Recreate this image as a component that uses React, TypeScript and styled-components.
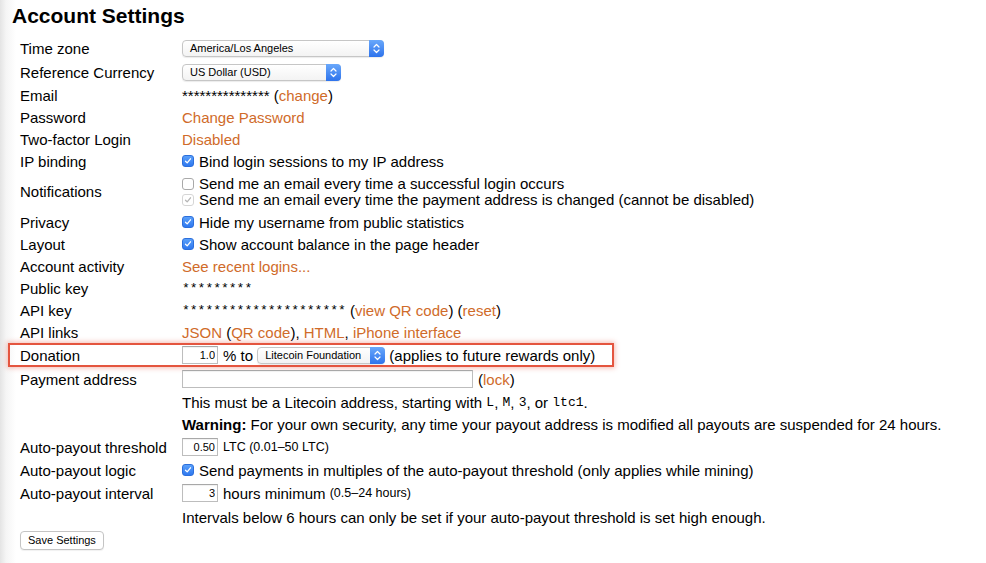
import React from 'react';
import styled, { createGlobalStyle, css } from 'styled-components';

const Global = createGlobalStyle`
  html, body {
    margin: 0;
    padding: 0;
    background: linear-gradient(to right, #e4e4e4 0px, #f5f5f5 6px, #ffffff 16px);
  }
  body {
    font-family: "Liberation Sans", Arial, Helvetica, sans-serif;
    color: #000;
  }
`;

const Page = styled.div`
  width: 986px;
  height: 563px;
  box-sizing: border-box;
  overflow: hidden;
  padding: 4px 0 0 12px;
`;

const Title = styled.h1`
  margin: 0 0 8px;
  font-size: 21px;
  line-height: 24px;
  font-weight: bold;
`;

const Form = styled.div`
  display: flex;
  flex-direction: column;
  padding-left: 8px;
`;

const Row = styled.div<{ $h?: number; $hl?: boolean }>`
  display: grid;
  grid-template-columns: 162px auto;
  align-items: center;
  height: ${(p) => p.$h ?? 22}px;
  font-size: 15px;
  line-height: 17px;
  ${(p) =>
    p.$hl &&
    css`
      margin-left: -12px;
      padding-left: 12px;
      width: 594px;
      box-shadow: inset 0 0 0 2px #e4553f, 0 0 5px 1px rgba(228, 85, 63, 0.4);
    `}
`;

const Label = styled.div`
  white-space: nowrap;
`;

const Value = styled.div<{ $col?: boolean }>`
  display: flex;
  flex-direction: ${(p) => (p.$col ? 'column' : 'row')};
  align-items: ${(p) => (p.$col ? 'flex-start' : 'center')};
  white-space: pre;
  line-height: ${(p) => (p.$col ? '16px' : '17px')};
`;

const Line = styled.div`
  display: flex;
  align-items: center;
  white-space: pre;
`;

const Link = styled.a`
  color: #d06b2a;
  text-decoration: none;
  cursor: pointer;
`;

const Mono = styled.span`
  font-family: "Liberation Mono", "Courier New", monospace;
  font-size: 13px;
`;

const Small = styled.span`
  font-size: 12.5px;
`;

const Bold = styled.b`
  font-weight: bold;
`;

const Check = styled.span<{ $state: 'on' | 'off' | 'dis' }>`
  display: inline-flex;
  align-items: center;
  justify-content: center;
  box-sizing: border-box;
  width: 12px;
  height: 12px;
  margin: 0 5px 0 0;
  border-radius: 3px;
  flex: none;
  ${(p) =>
    p.$state === 'on'
      ? css`
          background: linear-gradient(#5aa0fa, #2f78ef);
          border: 1px solid #2c6fdc;
        `
      : p.$state === 'dis'
      ? css`
          background: #fff;
          border: 1px solid #d6d6d6;
        `
      : css`
          background: #fff;
          border: 1px solid #a9a9a9;
        `}
`;

const CheckBox = ({ state }: { state: 'on' | 'off' | 'dis' }) => (
  <Check $state={state}>
    {state !== 'off' && (
      <svg width="8" height="8" viewBox="0 0 8 8">
        <path
          d="M1.5 4.2 L3.2 5.9 L6.5 1.8"
          fill="none"
          stroke={state === 'on' ? '#fff' : '#b5b5b5'}
          strokeWidth="1.3"
          strokeLinecap="round"
          strokeLinejoin="round"
        />
      </svg>
    )}
  </Check>
);

const SelectBox = styled.div<{ $w: number }>`
  display: inline-flex;
  align-items: center;
  box-sizing: border-box;
  width: ${(p) => p.$w}px;
  height: 17px;
  border: 1px solid #c6c6c6;
  border-radius: 4px;
  background: linear-gradient(#ffffff, #f3f3f3);
  box-shadow: 0 1px 1px rgba(0, 0, 0, 0.08);
  font-size: 11px;
  line-height: 15px;
  padding-left: 7px;
  flex: none;
`;

const SelectText = styled.span`
  flex: 1;
`;

const Stepper = styled.span`
  display: flex;
  align-items: center;
  justify-content: center;
  width: 15px;
  height: 17px;
  margin: -1px -1px -1px 0;
  border-radius: 0 4px 4px 0;
  background: linear-gradient(#69a8fb, #2e73ec);
`;

const Select = ({ w, children }: { w: number; children: React.ReactNode }) => (
  <SelectBox $w={w}>
    <SelectText>{children}</SelectText>
    <Stepper>
      <svg width="7" height="11" viewBox="0 0 7 11">
        <path d="M1 4 L3.5 1.5 L6 4" fill="none" stroke="#fff" strokeWidth="1.2" strokeLinecap="round" strokeLinejoin="round" />
        <path d="M1 7 L3.5 9.5 L6 7" fill="none" stroke="#fff" strokeWidth="1.2" strokeLinecap="round" strokeLinejoin="round" />
      </svg>
    </Stepper>
  </SelectBox>
);

const TextInput = styled.input<{ $w: number }>`
  box-sizing: border-box;
  width: ${(p) => p.$w}px;
  height: 18px;
  margin: 0 5px 0 0;
  padding: 0 2px;
  border: 1px solid #bdbdbd;
  border-top-color: #a8a8a8;
  box-shadow: inset 0 1px 1px rgba(0, 0, 0, 0.06);
  font-family: "Liberation Sans", Arial, sans-serif;
  font-size: 11px;
  text-align: right;
  color: #000;
  background: #fff;
  outline: none;
  flex: none;
`;

const Button = styled.button`
  font-family: "Liberation Sans", Arial, sans-serif;
  font-size: 11px;
  height: 19px;
  padding: 0 7px;
  border: 1px solid #c4c4c4;
  border-radius: 4px;
  background: #fff;
  color: #000;
  box-shadow: 0 1px 1px rgba(0, 0, 0, 0.06);
`;

export default function App() {
  return (
    <>
      <Global />
      <Page>
        <Title>Account Settings</Title>
        <Form>
          <Row $h={24}>
            <Label>Time zone</Label>
            <Value>
              <Select w={202}>America/Los Angeles</Select>
            </Value>
          </Row>
          <Row $h={24}>
            <Label>Reference Currency</Label>
            <Value>
              <Select w={159}>US Dollar (USD)</Select>
            </Value>
          </Row>
          <Row>
            <Label>Email</Label>
            <Value>
              <span>*************** (</span>
              <Link>change</Link>
              <span>)</span>
            </Value>
          </Row>
          <Row>
            <Label>Password</Label>
            <Value>
              <Link>Change Password</Link>
            </Value>
          </Row>
          <Row>
            <Label>Two-factor Login</Label>
            <Value>
              <Link>Disabled</Link>
            </Value>
          </Row>
          <Row>
            <Label>IP binding</Label>
            <Value>
              <CheckBox state="on" />
              Bind login sessions to my IP address
            </Value>
          </Row>
          <Row $h={39}>
            <Label>Notifications</Label>
            <Value $col>
              <Line>
                <CheckBox state="off" />
                Send me an email every time a successful login occurs
              </Line>
              <Line>
                <CheckBox state="dis" />
                Send me an email every time the payment address is changed (cannot be disabled)
              </Line>
            </Value>
          </Row>
          <Row>
            <Label>Privacy</Label>
            <Value>
              <CheckBox state="on" />
              Hide my username from public statistics
            </Value>
          </Row>
          <Row>
            <Label>Layout</Label>
            <Value>
              <CheckBox state="on" />
              Show account balance in the page header
            </Value>
          </Row>
          <Row>
            <Label>Account activity</Label>
            <Value>
              <Link>See recent logins...</Link>
            </Value>
          </Row>
          <Row>
            <Label>Public key</Label>
            <Value>
              <Mono>*********</Mono>
            </Value>
          </Row>
          <Row>
            <Label>API key</Label>
            <Value>
              <Mono>*********************</Mono>
              <span> (</span>
              <Link>view QR code</Link>
              <span>) (</span>
              <Link>reset</Link>
              <span>)</span>
            </Value>
          </Row>
          <Row>
            <Label>API links</Label>
            <Value>
              <Link>JSON</Link>
              <span> (</span>
              <Link>QR code</Link>
              <span>), </span>
              <Link>HTML</Link>
              <span>, </span>
              <Link>iPhone interface</Link>
            </Value>
          </Row>
          <Row $h={24} $hl>
            <Label>Donation</Label>
            <Value>
              <TextInput $w={36} defaultValue="1.0" />
              <span>% to </span>
              <Select w={128}>Litecoin Foundation</Select>
              <span> (applies to future rewards only)</span>
            </Value>
          </Row>
          <Row $h={24}>
            <Label>Payment address</Label>
            <Value>
              <TextInput $w={291} defaultValue="" />
              <span>(</span>
              <Link>lock</Link>
              <span>)</span>
            </Value>
          </Row>
          <Row>
            <Label />
            <Value>
              <span>This must be a Litecoin address, starting with </span>
              <Mono>L</Mono>
              <span>, </span>
              <Mono>M</Mono>
              <span>, </span>
              <Mono>3</Mono>
              <span>, or </span>
              <Mono>ltc1</Mono>
              <span>.</span>
            </Value>
          </Row>
          <Row>
            <Label />
            <Value>
              <Bold>Warning:</Bold>
              <span> For your own security, any time your payout address is modified all payouts are suspended for 24 hours.</span>
            </Value>
          </Row>
          <Row $h={24}>
            <Label>Auto-payout threshold</Label>
            <Value>
              <TextInput $w={36} defaultValue="0.50" />
              <Small>LTC (0.01–50 LTC)</Small>
            </Value>
          </Row>
          <Row $h={22}>
            <Label>Auto-payout logic</Label>
            <Value>
              <CheckBox state="on" />
              Send payments in multiples of the auto-payout threshold (only applies while mining)
            </Value>
          </Row>
          <Row $h={24}>
            <Label>Auto-payout interval</Label>
            <Value>
              <TextInput $w={36} defaultValue="3" />
              <span>hours minimum </span>
              <Small>(0.5–24 hours)</Small>
            </Value>
          </Row>
          <Row $h={24}>
            <Label />
            <Value>Intervals below 6 hours can only be set if your auto-payout threshold is set high enough.</Value>
          </Row>
          <Row $h={22}>
            <Value>
              <Button>Save Settings</Button>
            </Value>
          </Row>
        </Form>
      </Page>
    </>
  );
}
